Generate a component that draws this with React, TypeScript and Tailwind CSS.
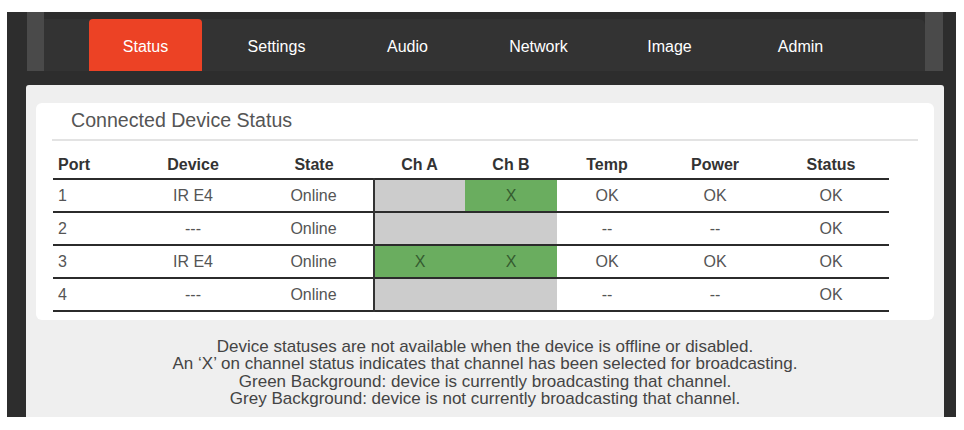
import React from 'react';

type Cell = 'on' | 'off';

type PortRow = {
  port: string;
  device: string;
  state: string;
  chA: Cell;
  chAX: boolean;
  chB: Cell;
  chBX: boolean;
  temp: string;
  power: string;
  status: string;
};

const tabs = ['Status', 'Settings', 'Audio', 'Network', 'Image', 'Admin'];

const rows: PortRow[] = [
  { port: '1', device: 'IR E4', state: 'Online', chA: 'off', chAX: false, chB: 'on', chBX: true, temp: 'OK', power: 'OK', status: 'OK' },
  { port: '2', device: '---', state: 'Online', chA: 'off', chAX: false, chB: 'off', chBX: false, temp: '--', power: '--', status: 'OK' },
  { port: '3', device: 'IR E4', state: 'Online', chA: 'on', chAX: true, chB: 'on', chBX: true, temp: 'OK', power: 'OK', status: 'OK' },
  { port: '4', device: '---', state: 'Online', chA: 'off', chAX: false, chB: 'off', chBX: false, temp: '--', power: '--', status: 'OK' },
];

const notes = [
  'Device statuses are not available when the device is offline or disabled.',
  'An \u2018X\u2019 on channel status indicates that channel has been selected for broadcasting.',
  'Green Background: device is currently broadcasting that channel.',
  'Grey Background: device is not currently broadcasting that channel.',
];

function ChannelCell({ state, marked, first }: { state: Cell; marked: boolean; first?: boolean }) {
  return (
    <td
      className={`p-0 text-center ${state === 'on' ? 'bg-[#6aad5f] text-[#355b30]' : 'bg-[#cccccc]'} ${
        first ? 'border-l-2 border-l-[#333]' : ''
      }`}
    >
      {marked ? 'X' : ''}
    </td>
  );
}

export default function App() {
  return (
    <div
      className="w-[964px] h-[430px] bg-white pt-[12px] pl-[7px]"
      style={{ fontFamily: '"Liberation Sans", Arial, sans-serif' }}
    >
      <div className="w-[949px] h-[405px] bg-[#2d2d2d] overflow-hidden">
        {/* top navigation */}
        <div className="flex pl-[20px]">
          <div className="w-[17px] h-[59px] bg-[#4a4a4a]" />
          <div className="mt-[7px] w-[881px] h-[52px] bg-[#333333] rounded-tr-[6px] flex pl-[45px] gap-[18px]">
            {tabs.map((t, i) => (
              <div
                key={t}
                className={`w-[113px] h-full flex items-center justify-center pt-[3px] text-white text-[16px] ${
                  i === 0 ? 'bg-[#ec4225] rounded-t-[4px]' : ''
                }`}
              >
                {t}
              </div>
            ))}
          </div>
          <div className="w-[18px] h-[59px] bg-[#4a4a4a]" />
        </div>

        {/* content panel */}
        <div className="mt-[14px] ml-[19px] w-[918px] h-[340px] bg-[#efefef] rounded-t-[3px] pt-[18px]">
          <div className="ml-[10px] w-[898px] h-[217px] bg-white rounded-[6px] pt-[5px]">
            <div className="mx-[16px] h-[33px] pl-[19px] border-b-2 border-[#e3e3e3] text-[19.6px] leading-[24px] text-[#555]">
              Connected Device Status
            </div>
            <table className="mt-[8px] ml-[17px] w-[836px] border-collapse table-fixed text-[16px]">
              <colgroup>
                <col className="w-[79px]" />
                <col className="w-[122px]" />
                <col className="w-[120px]" />
                <col className="w-[91px]" />
                <col className="w-[92px]" />
                <col className="w-[100px]" />
                <col className="w-[116px]" />
                <col className="w-[116px]" />
              </colgroup>
              <thead>
                <tr className="h-[30px] border-b-2 border-[#2b2b2b] text-[#333] font-bold">
                  <th className="text-left pl-[5px] pt-[3px] font-bold">Port</th>
                  <th className="pt-[3px] font-bold">Device</th>
                  <th className="pt-[3px] font-bold">State</th>
                  <th className="pt-[3px] font-bold">Ch A</th>
                  <th className="pt-[3px] font-bold">Ch B</th>
                  <th className="pt-[3px] font-bold">Temp</th>
                  <th className="pt-[3px] font-bold">Power</th>
                  <th className="pt-[3px] font-bold">Status</th>
                </tr>
              </thead>
              <tbody className="text-[#555]">
                {rows.map((r) => (
                  <tr key={r.port} className="h-[33px] border-b-2 border-[#2b2b2b]">
                    <td className="pl-[5px] p-0">{r.port}</td>
                    <td className="text-center p-0">{r.device}</td>
                    <td className="text-center p-0">{r.state}</td>
                    <ChannelCell state={r.chA} marked={r.chAX} first />
                    <ChannelCell state={r.chB} marked={r.chBX} />
                    <td className="text-center p-0">{r.temp}</td>
                    <td className="text-center p-0">{r.power}</td>
                    <td className="text-center p-0">{r.status}</td>
                  </tr>
                ))}
              </tbody>
            </table>
          </div>

          <div className="mt-[18px] text-center text-[#444] text-[17px] leading-[17.4px]">
            {notes.map((n) => (
              <div key={n}>{n}</div>
            ))}
          </div>
        </div>
      </div>
    </div>
  );
}
